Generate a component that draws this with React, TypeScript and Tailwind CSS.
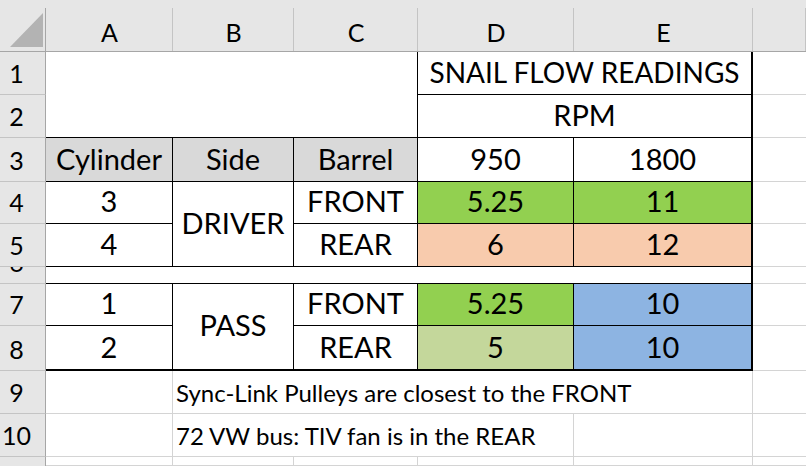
import type { ReactNode } from "react";
import { twMerge } from "tailwind-merge";

// one sheet cell: bottom-aligned, centered text, light gridlines unless overridden
function Cell({ className, children }: { className?: string; children?: ReactNode }) {
    return (
        <div
            className={twMerge(
                "flex items-end justify-center overflow-hidden whitespace-nowrap border-r border-b border-[#d4d4d4] bg-white pb-2 text-[29px] leading-none text-black",
                className
            )}
        >
            {children}
        </div>
    );
}

function ColHead({ label }: { label?: string }) {
    return (
        <div className="relative flex items-end justify-center border-b border-[#a6a6a6] bg-[#e6e6e6] pb-1.5 text-[25px] leading-none text-black after:absolute after:top-2 after:right-0 after:bottom-0 after:w-px after:bg-[#c4c4c4]">
            {label}
        </div>
    );
}

function RowHead({ label }: { label: string }) {
    return (
        <div className="flex items-end justify-center overflow-hidden border-r border-b border-r-[#a6a6a6] border-b-[#c4c4c4] bg-[#e6e6e6] pr-3 pb-2 text-[25px] leading-none text-black">
            {label}
        </div>
    );
}

export default function App() {
    const black = "border-black";
    return (
        <div className="h-[466px] w-[806px] overflow-hidden bg-white font-['Lato',sans-serif]">
            <div className="grid h-full grid-cols-[46px_127px_121px_124px_156px_179px_1fr] grid-rows-[52px_43px_43px_44px_42px_43px_17px_42px_45px_43px_43px_1fr]">
                {/* Column headers */}
                <div className="relative border-b border-[#a6a6a6] bg-[#e6e6e6] after:absolute after:top-2 after:right-0 after:bottom-0 after:w-px after:bg-[#a6a6a6]">
                    <svg className="absolute top-0 left-0" width="46" height="51" viewBox="0 0 46 51">
                        <polygon points="10,47 43,47 43,13" fill="#b3b3b3" />
                    </svg>
                </div>
                <ColHead label="A" />
                <ColHead label="B" />
                <ColHead label="C" />
                <ColHead label="D" />
                <ColHead label="E" />
                <ColHead />

                {/* Row 1 */}
                <RowHead label="1" />
                <Cell className={twMerge("col-span-3 row-span-2", black)} />
                <Cell className="col-span-2 border-black border-r-2 text-[28px] leading-none">SNAIL FLOW READINGS</Cell>
                <Cell className="border-r-0" />

                {/* Row 2 */}
                <RowHead label="2" />
                <Cell className="col-span-2 border-black border-r-2">RPM</Cell>
                <Cell className="border-r-0" />

                {/* Row 3 */}
                <RowHead label="3" />
                <Cell className="border-black bg-[#d9d9d9]">Cylinder</Cell>
                <Cell className="border-black bg-[#d9d9d9]">Side</Cell>
                <Cell className="border-black bg-[#d9d9d9]">Barrel</Cell>
                <Cell className={black}>950</Cell>
                <Cell className="border-black border-r-2">1800</Cell>
                <Cell className="border-r-0" />

                {/* Row 4 */}
                <RowHead label="4" />
                <Cell className={black}>3</Cell>
                <Cell className="row-span-2 items-center border-black pt-0 pb-1">DRIVER</Cell>
                <Cell className={black}>FRONT</Cell>
                <Cell className="border-black bg-[#92d050]">5.25</Cell>
                <Cell className="border-black border-r-2 bg-[#92d050]">11</Cell>
                <Cell className="border-r-0" />

                {/* Row 5 */}
                <RowHead label="5" />
                <Cell className={black}>4</Cell>
                <Cell className={black}>REAR</Cell>
                <Cell className="border-black bg-[#f8cbad]">6</Cell>
                <Cell className="border-black border-r-2 bg-[#f8cbad]">12</Cell>
                <Cell className="border-r-0" />

                {/* Row 6 (squeezed spacer row) */}
                <RowHead label="6" />
                <Cell className="col-span-5 border-black border-r-2" />
                <Cell className="border-r-0" />

                {/* Row 7 */}
                <RowHead label="7" />
                <Cell className={black}>1</Cell>
                <Cell className="row-span-2 items-center border-black border-b-2 pt-0 pb-1">PASS</Cell>
                <Cell className={black}>FRONT</Cell>
                <Cell className="border-black bg-[#92d050]">5.25</Cell>
                <Cell className="border-black border-r-2 bg-[#8db4e2]">10</Cell>
                <Cell className="border-r-0" />

                {/* Row 8 */}
                <RowHead label="8" />
                <Cell className="border-black border-b-2">2</Cell>
                <Cell className="border-black border-b-2">REAR</Cell>
                <Cell className="border-black border-b-2 bg-[#c4d79b]">5</Cell>
                <Cell className="border-black border-r-2 border-b-2 bg-[#8db4e2]">10</Cell>
                <Cell className="border-r-0" />

                {/* Row 9 */}
                <RowHead label="9" />
                <Cell />
                <Cell className="col-span-4 justify-start pl-[3px] text-[24px] leading-none">
                    Sync-Link Pulleys are closest to the FRONT
                </Cell>
                <Cell className="border-r-0" />

                {/* Row 10 */}
                <RowHead label="10" />
                <Cell />
                <Cell className="col-span-3 justify-start pl-[3px] text-[24px] leading-none">
                    72 VW bus: TIV fan is in the REAR
                </Cell>
                <Cell />
                <Cell className="border-r-0" />

                {/* Row 11 */}
                <div className="border-r border-[#a6a6a6] bg-[#e6e6e6]" />
                <Cell />
                <Cell />
                <Cell />
                <Cell />
                <Cell />
                <Cell className="border-r-0" />
            </div>
        </div>
    );
}
